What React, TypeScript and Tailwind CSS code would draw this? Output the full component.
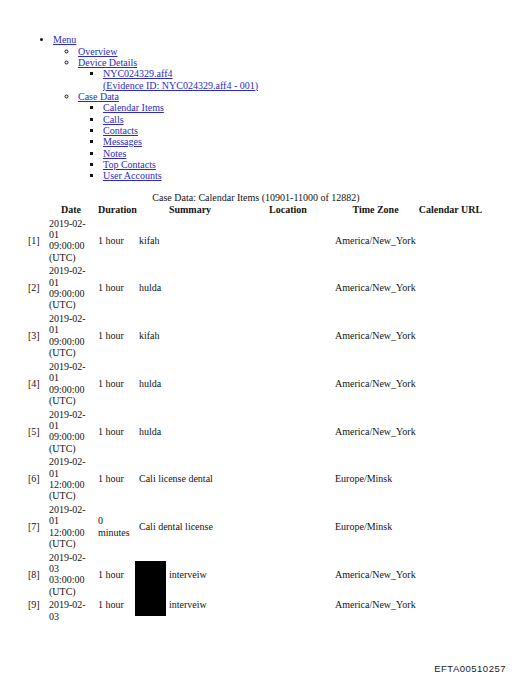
import React from 'react';

const link = 'text-[#2b2bc8] underline';

const rows = [
  { n: 1, date: ['2019-02-', '01', '09:00:00', '(UTC)'], dur: ['1 hour'], sum: 'kifah', tz: 'America/New_York' },
  { n: 2, date: ['2019-02-', '01', '09:00:00', '(UTC)'], dur: ['1 hour'], sum: 'hulda', tz: 'America/New_York' },
  { n: 3, date: ['2019-02-', '01', '09:00:00', '(UTC)'], dur: ['1 hour'], sum: 'kifah', tz: 'America/New_York' },
  { n: 4, date: ['2019-02-', '01', '09:00:00', '(UTC)'], dur: ['1 hour'], sum: 'hulda', tz: 'America/New_York' },
  { n: 5, date: ['2019-02-', '01', '09:00:00', '(UTC)'], dur: ['1 hour'], sum: 'hulda', tz: 'America/New_York' },
  { n: 6, date: ['2019-02-', '01', '12:00:00', '(UTC)'], dur: ['1 hour'], sum: 'Cali license dental', tz: 'Europe/Minsk' },
  { n: 7, date: ['2019-02-', '01', '12:00:00', '(UTC)'], dur: ['0', 'minutes'], sum: 'Cali dental license', tz: 'Europe/Minsk' },
  { n: 8, date: ['2019-02-', '03', '03:00:00', '(UTC)'], dur: ['1 hour'], sum: 'interveiw', tz: 'America/New_York', redacted: true },
  { n: 9, date: ['2019-02-', '03'], dur: ['1 hour'], sum: 'interveiw', tz: 'America/New_York', redacted: true, cut: true },
];

const grid = 'grid grid-cols-[21px_49px_41px_104px_92px_83px_66px]';

const Lines = ({ lines }: { lines: string[] }) => (
  <div>
    {lines.map((l, i) => (
      <div key={i} className="whitespace-nowrap">{l}</div>
    ))}
  </div>
);

export default function App() {
  return (
    <div
      className="relative flex h-[678px] w-[512px] flex-col bg-white text-[10px] leading-[11.33px] text-[#141414]"
      style={{ fontFamily: '"Liberation Serif", "Times New Roman", serif' }}
    >
      <ul className="list-disc pl-[53px] pt-[34.3px]">
        <li>
          <a className={link}>Menu</a>
          <ul className="list-[circle] pl-[25px]">
            <li><a className={link}>Overview</a></li>
            <li>
              <a className={link}>Device Details</a>
              <ul className="list-[square] pl-[25px]">
                <li>
                  <a className={link}>
                    NYC024329.aff4
                    <br />
                    (Evidence ID: NYC024329.aff4 - 001)
                  </a>
                </li>
              </ul>
            </li>
            <li>
              <a className={link}>Case Data</a>
              <ul className="list-[square] pl-[25px]">
                {['Calendar Items', 'Calls', 'Contacts', 'Messages', 'Notes', 'Top Contacts', 'User Accounts'].map((t) => (
                  <li key={t}><a className={link}>{t}</a></li>
                ))}
              </ul>
            </li>
          </ul>
        </li>
      </ul>

      <div className="mt-[10.6px] pl-[28px]">
        <div className="w-[456px] text-center">Case Data: Calendar Items (10901-11000 of 12882)</div>
        <div className={`${grid} pt-[0.4px] pb-[1.4px] font-bold`}>
          <div />
          <div className="pr-[5px] text-center">Date</div>
          <div className="pr-[3px] text-center">Duration</div>
          <div className="pr-[2px] text-center">Summary</div>
          <div className="pr-[2px] text-center">Location</div>
          <div className="pr-[2px] text-center">Time Zone</div>
          <div className="pr-[1px] text-center whitespace-nowrap">Calendar URL</div>
        </div>
        {rows.map((r) => (
          <div key={r.n} className={`${grid} py-[1.2px] ${r.cut ? 'items-start' : 'items-center'}`}>
            <div>[{r.n}]</div>
            <Lines lines={r.date} />
            <Lines lines={r.dur} />
            <div className={r.redacted ? 'pl-[30px]' : ''}>{r.sum}</div>
            <div />
            <div className="whitespace-nowrap">{r.tz}</div>
            <div />
          </div>
        ))}
      </div>

      {/* redaction block over rows 8-9 */}
      <div className="absolute left-[135px] top-[561px] h-[55px] w-[31px] bg-black" />

      <div
        className="mt-auto pb-[4px] pr-[6px] text-right text-[9.5px] leading-[11px] tracking-[0.5px] text-[#222]"
        style={{ fontFamily: '"Liberation Sans", Arial, sans-serif' }}
      >
        EFTA00510257
      </div>
    </div>
  );
}
